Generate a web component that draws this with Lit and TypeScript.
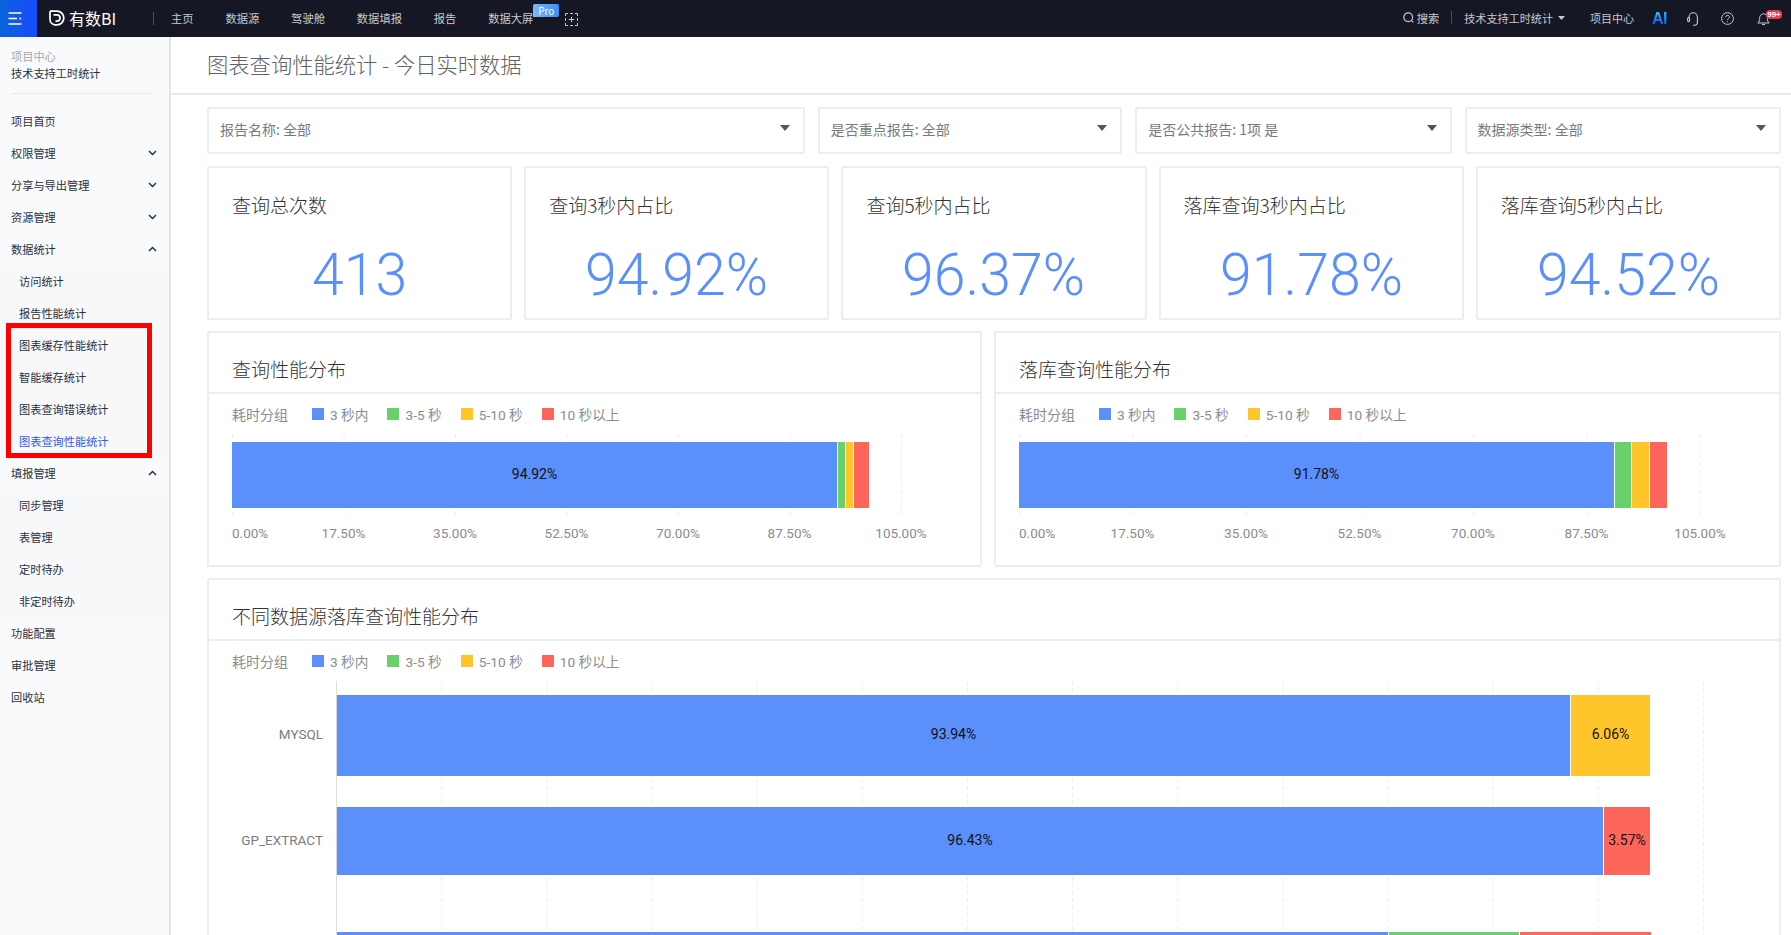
import { LitElement, html, css, svg } from "lit";
import { customElement } from "lit/decorators.js";

const BLUE = "#5b8ff9", GREEN = "#69d16c", YELLOW = "#ffc62b", RED = "#ff665b";

type NavItem = { t: string; kind?: "sub" | "active"; chev?: "up" | "down"; open?: boolean };
const MENU: NavItem[] = [
  { t: "项目首页" },
  { t: "权限管理", chev: "down" },
  { t: "分享与导出管理", chev: "down" },
  { t: "资源管理", chev: "down" },
  { t: "数据统计", chev: "up" },
  { t: "访问统计", kind: "sub" },
  { t: "报告性能统计", kind: "sub" },
  { t: "图表缓存性能统计", kind: "sub" },
  { t: "智能缓存统计", kind: "sub" },
  { t: "图表查询错误统计", kind: "sub" },
  { t: "图表查询性能统计", kind: "active" },
  { t: "填报管理", chev: "up" },
  { t: "同步管理", kind: "sub" },
  { t: "表管理", kind: "sub" },
  { t: "定时待办", kind: "sub" },
  { t: "非定时待办", kind: "sub" },
  { t: "功能配置" },
  { t: "审批管理" },
  { t: "回收站" },
];

const LEGEND = [
  { c: BLUE, t: "3 秒内" },
  { c: GREEN, t: "3-5 秒" },
  { c: YELLOW, t: "5-10 秒" },
  { c: RED, t: "10 秒以上" },
];

const STATS = [
  ["查询总次数", "413"],
  ["查询3秒内占比", "94.92%"],
  ["查询5秒内占比", "96.37%"],
  ["落库查询3秒内占比", "91.78%"],
  ["落库查询5秒内占比", "94.52%"],
];

const TICKS = ["0.00%", "17.50%", "35.00%", "52.50%", "70.00%", "87.50%", "105.00%"];

type Seg = { c: string; w: number; label?: string };

function smallChart(step: number, segs: Seg[]) {
  let x = 0;
  return html`<svg class="plot" width="760" height="125" viewBox="0 0 760 125">
    ${TICKS.map((_, i) => svg`<line class="grid" x1=${0.5 + i * step} x2=${0.5 + i * step} y1="4" y2="85"></line>`)}
    ${segs.map((s) => {
      const r = svg`<rect x=${x} y="12" width=${s.w} height="66" fill=${s.c}></rect>
        ${s.label ? svg`<text class="val" x=${x + s.w / 2} y="44">${s.label}</text>` : ""}`;
      x += s.w + 1;
      return r;
    })}
    ${TICKS.map(
      (t, i) => svg`<text class="tick" x=${i * step} y="103" text-anchor=${i === 0 ? "start" : "middle"}>${t}</text>`
    )}
  </svg>`;
}

function bigChart() {
  const x0 = 105;
  const rows = [
    { name: "MYSQL", y: 14, h: 81, segs: [{ c: BLUE, w: 1233, label: "93.94%" }, { c: YELLOW, w: 79, label: "6.06%" }] },
    { name: "GP_EXTRACT", y: 126, h: 68, segs: [{ c: BLUE, w: 1266, label: "96.43%" }, { c: RED, w: 46, label: "3.57%" }] },
    { name: "", y: 251, h: 69, segs: [{ c: BLUE, w: 1051 }, { c: GREEN, w: 130 }, { c: RED, w: 131 }] },
  ];
  return html`<svg class="plot" width="1530" height="256" viewBox="0 0 1530 256">
    ${Array.from({ length: 13 }, (_, i) => svg`<line class="grid" x1=${104.5 + 105.15 * (i + 1)} x2=${104.5 + 105.15 * (i + 1)} y1="0" y2="256"></line>`)}
    <line class="axis" x1="104.5" x2="104.5" y1="0" y2="256"></line>
    ${rows.map((row) => {
      let x = x0;
      const cy = row.y + row.h / 2 - 1.5;
      return svg`
        <text class="cat" x="91" y=${cy}>${row.name}</text>
        ${row.segs.map((s) => {
          const r = svg`<rect x=${x} y=${row.y} width=${s.w} height=${row.h} fill=${s.c}></rect>
            ${s.label ? svg`<text class="val" x=${x + s.w / 2} y=${cy}>${s.label}</text>` : ""}`;
          x += s.w + 1;
          return r;
        })}`;
    })}
  </svg>`;
}

const chevron = (dir?: "up" | "down") =>
  dir
    ? html`<svg class="chev" width="9" height="6" viewBox="0 0 9 6">
        <path d=${dir === "down" ? "M1 1l3.5 3.5L8 1" : "M1 5l3.5-3.5L8 5"} fill="none" stroke="#22283a" stroke-width="1.4"></path>
      </svg>`
    : "";

const caret = html`<svg class="sel-caret" width="10" height="6" viewBox="0 0 10 6"><path d="M0 0h10L5 6z" fill="#555"></path></svg>`;

@customElement("app-root")
export class AppRoot extends LitElement {
  static styles = css`
    :host {
      display: block;
      width: 1791px;
      height: 935px;
      overflow: hidden;
      background: #fff;
      font-family: "Noto Sans CJK SC", "Noto Sans", sans-serif;
      color: #333;
    }
    .top {
      height: 37px;
      background: #151824;
      display: flex;
      align-items: center;
      color: #c6c9d0;
      font-size: 11.3px;
    }
    .burger {
      box-sizing: border-box;
      width: 37px;
      height: 37px;
      padding-left: 8px;
      background: linear-gradient(90deg, #0b62d9, #1a4bff);
      display: flex;
      align-items: center;
    }
    .logo {
      display: flex;
      align-items: center;
      margin: 0 0 2px 12px;
      color: #fff;
      font-size: 16px;
      width: 104px;
      gap: 4px;
    }
    .vsep {
      width: 1px;
      height: 13px;
      background: #4a4e5a;
    }
    .nav {
      display: flex;
      gap: 31.8px;
      margin: 0 0 2px 17px;
    }
    .pro-wrap {
      position: relative;
    }
    .pro {
      position: absolute;
      left: 45px;
      top: -6px;
      width: 26px;
      height: 13px;
      line-height: 13px;
      font-size: 10px;
      text-align: center;
      color: #fff;
      border-radius: 2px 2px 2px 0;
      background: linear-gradient(90deg, #74bcff, #3f8ff2);
    }
    .fs {
      margin-left: 32px;
      margin-top: 1px;
    }
    .right {
      margin-left: auto;
      padding-right: 21px;
      display: flex;
      align-items: center;
      margin-bottom: 2px;
    }
    .search {
      display: flex;
      align-items: center;
      gap: 3px;
    }
    .m12 {
      margin-left: 12px;
    }
    .project {
      margin-left: 25px;
      font-size: 11px;
    }
    .user {
      margin-left: 12px;
      display: flex;
      align-items: center;
      gap: 5px;
      font-size: 11.1px;
    }
    .ai {
      margin: 2px 0 0 18px;
      width: 15px;
      font-family: "Liberation Sans", sans-serif;
      font-weight: 700;
      font-size: 16px;
      line-height: 18px;
      letter-spacing: -0.5px;
      background: linear-gradient(180deg, #2fc4ff 10%, #0d4df0 85%);
      -webkit-background-clip: text;
      background-clip: text;
      color: transparent;
    }
    .ico1 {
      margin: 2px 0 0 20px;
    }
    .ico2 {
      margin: 2px 0 0 22px;
    }
    .bell {
      margin: 2px 0 0 23px;
      position: relative;
      display: flex;
    }
    .badge {
      position: absolute;
      left: 9px;
      top: -2px;
      width: 16px;
      height: 9px;
      line-height: 9px;
      font-size: 8px;
      font-weight: 700;
      text-align: center;
      color: #fff;
      background: #e8394a;
      border-radius: 4px;
      font-family: "Liberation Sans", sans-serif;
    }
    .body {
      display: flex;
      height: 898px;
    }
    .side {
      position: relative;
      box-sizing: border-box;
      width: 171px;
      flex: none;
      background: #f9fafc;
      border-right: 2px solid #e4e5ea;
      font-size: 11.2px;
      color: #2b3040;
    }
    .crumb {
      padding: 11px 0 0 11px;
      height: 56px;
      box-sizing: border-box;
      line-height: 17px;
    }
    .crumb .dim {
      color: #a6a8ad;
    }
    .hr {
      height: 1px;
      background: #e9eaee;
      margin: 0 17px 0 11px;
    }
    .menu {
      padding-top: 11px;
    }
    .mi {
      height: 32px;
      display: flex;
      align-items: center;
      justify-content: space-between;
      padding: 0 12px 0 11px;
    }
    .mi.sub,
    .mi.active {
      padding-left: 19px;
      background: #f7f8fa;
    }
    .mi.active {
      color: #3658f0;
    }
    .mark {
      position: absolute;
      left: 6px;
      top: 286px;
      width: 146px;
      height: 135px;
      box-sizing: border-box;
      border: 5.5px solid #f00;
    }
    .main {
      flex: 1;
      min-width: 0;
      overflow: hidden;
    }
    .head {
      box-sizing: border-box;
      height: 58px;
      padding: 0 0 4px 36px;
      border-bottom: 2px solid #e8e8ec;
      display: flex;
      align-items: center;
      font-size: 21.3px;
      font-weight: 300;
      color: #5e6166;
    }
    .content {
      padding: 12px 10px 0 36px;
      display: flex;
      flex-direction: column;
      gap: 12px;
    }
    .filters {
      display: grid;
      grid-template-columns: 599fr 305fr 317fr 317fr;
      gap: 13px;
    }
    .sel {
      box-sizing: border-box;
      height: 47px;
      border: 2px solid #ecedf3;
      border-radius: 2px;
      display: flex;
      align-items: center;
      justify-content: space-between;
      padding: 0 13px 4px 11px;
      font-size: 14px;
      color: #777a80;
    }
    .sel-caret {
      margin-bottom: 2px;
    }
    .stats {
      display: grid;
      grid-template-columns: repeat(5, 1fr);
      gap: 12px;
      margin-bottom: -1px;
    }
    .card {
      box-sizing: border-box;
      border: 2px solid #ecedf3;
      border-radius: 2px;
      background: #fff;
    }
    .stat {
      height: 154px;
      padding: 25px 23px 0;
    }
    .stat-t {
      font-size: 19px;
      font-weight: 300;
      line-height: 24px;
      color: #333;
    }
    .num {
      margin-top: 28px;
      text-align: center;
      font-family: Roboto, sans-serif;
      font-weight: 300;
      font-size: 59px;
      line-height: 60px;
      color: #5b8ff9;
      transform: scaleX(0.97);
    }
    .charts {
      display: grid;
      grid-template-columns: 775px 1fr;
      gap: 12px;
      margin-bottom: -1px;
    }
    .chart {
      height: 236px;
    }
    .bigcard {
      height: 420px;
    }
    .ch {
      box-sizing: border-box;
      height: 61px;
      padding: 0 23px 11px;
      display: flex;
      align-items: flex-end;
      border-bottom: 2px solid #ecedf3;
      font-size: 19px;
      font-weight: 300;
      line-height: 24px;
      color: #333;
    }
    .legend {
      margin: 10px 0 0 23px;
      height: 20px;
      display: flex;
      align-items: center;
      font-family: Roboto, "Noto Sans CJK SC", sans-serif;
      font-size: 13.7px;
      color: #8a8c90;
    }
    .legend .lab {
      width: 80px;
      font-size: 14px;
    }
    .lg {
      display: flex;
      align-items: center;
      gap: 6px;
      margin-right: 19px;
    }
    .sw {
      width: 12px;
      height: 12px;
    }
    .plot {
      display: block;
      margin: 6px 0 0 23px;
      overflow: hidden;
    }
    .bigcard .plot {
      margin-top: 10px;
    }
    .grid {
      stroke: #eeeef1;
      stroke-width: 1;
      stroke-dasharray: 4 3;
    }
    .axis {
      stroke: #dcdcdf;
      stroke-width: 1;
    }
    .val {
      font-family: Roboto, sans-serif;
      font-size: 14px;
      text-anchor: middle;
      dominant-baseline: central;
      fill: #111;
    }
    .tick {
      font-family: Roboto, sans-serif;
      font-size: 13.5px;
      dominant-baseline: central;
      fill: #8a8c90;
    }
    .cat {
      font-family: Roboto, sans-serif;
      font-size: 13.5px;
      text-anchor: end;
      dominant-baseline: central;
      fill: #7a7c80;
    }
  `;

  render() {
    return html`
      <div class="top">
        <div class="burger">
          <svg width="14" height="13" viewBox="0 0 14 13" fill="none" stroke="#fff" stroke-width="1.3">
            <path d="M.5 1h13M.5 6.500h8.500M.5 12h13"></path>
            <path d="M11.500 5v3l2-1.500z" fill="#fff" stroke="none"></path>
          </svg>
        </div>
        <div class="logo">
          <svg width="16" height="16" viewBox="0 0 16 16" fill="none" stroke="#fff" stroke-width="1.7">
            <path d="M1 1.200h7a6.800 6.800 0 0 1 0 13.600H5.500"></path>
            <path d="M1 1.200v8a5.600 5.600 0 0 0 5 5.600"></path>
            <path d="M4.500 4.800h3.300a3.200 3.200 0 0 1 0 6.400H6.500"></path>
          </svg>
          <span>有数BI</span>
        </div>
        <div class="vsep"></div>
        <div class="nav">
          <span>主页</span><span>数据源</span><span>驾驶舱</span><span>数据填报</span><span>报告</span>
          <span class="pro-wrap">数据大屏<span class="pro">Pro</span></span>
        </div>
        <svg class="fs" width="13" height="13" viewBox="0 0 13 13" fill="none" stroke="#c6c9d0" stroke-width="1">
          <path d="M.5 3V.5H3M5 .5h3M10 .5h2.500V3M12.500 5v3M12.500 10v2.500H10M8 12.500H5M3 12.500H.5V10M.5 8V5"></path>
          <path d="M6.500 3.800v5.400M3.800 6.500h5.400"></path>
        </svg>
        <div class="right">
          <div class="search">
            <svg width="11" height="11" viewBox="0 0 11 11" fill="none" stroke="#c6c9d0" stroke-width="1.2">
              <circle cx="5.200" cy="5.200" r="4.400"></circle><path d="M8.400 8.400l2 2"></path>
            </svg>
            <span>搜索</span>
          </div>
          <div class="vsep m12"></div>
          <div class="user">
            <span>技术支持工时统计</span>
            <svg width="7" height="4" viewBox="0 0 7 4"><path d="M0 0h7L3.500 4z" fill="#c6c9d0"></path></svg>
          </div>
          <span class="project">项目中心</span>
          <span class="ai">AI</span>
          <svg class="ico1" width="12" height="14" viewBox="0 0 12 14" fill="none" stroke="#c6c9d0" stroke-width="1.1">
            <path d="M2 6V5a4.200 4.200 0 0 1 8.400 0v5a2.800 2.800 0 0 1-3 3.300H6"></path>
            <rect x=".6" y="5.600" width="2" height="4" rx="1"></rect>
          </svg>
          <svg class="ico2" width="13" height="13" viewBox="0 0 13 13" fill="none" stroke="#c6c9d0" stroke-width="1">
            <circle cx="6.500" cy="6.500" r="5.900"></circle>
            <path d="M4.800 5.200a1.800 1.800 0 1 1 2.600 1.500c-.6.3-.9.7-.9 1.300"></path>
            <path d="M6.500 9.200v1"></path>
          </svg>
          <div class="bell">
            <svg width="13" height="14" viewBox="0 0 13 14" fill="none" stroke="#c6c9d0" stroke-width="1">
              <path d="M.8 11h11.400c-1.400-1.200-1.800-2.500-1.800-4.600 0-2.600-1.500-4.600-3.900-4.600S2.600 3.800 2.600 6.400C2.600 8.500 2.200 9.800.8 11z"></path>
              <path d="M5 12.500h3"></path>
            </svg>
            <span class="badge">99+</span>
          </div>
        </div>
      </div>
      <div class="body">
        <aside class="side">
          <div class="crumb">
            <div class="dim">项目中心</div>
            <div>技术支持工时统计</div>
          </div>
          <div class="hr"></div>
          <div class="menu">
            ${MENU.map(
              (m) => html`<div class="mi ${m.kind ?? ""}"><span>${m.t}</span>${chevron(m.chev)}</div>`
            )}
          </div>
          <div class="mark"></div>
        </aside>
        <main class="main">
          <div class="head">图表查询性能统计 - 今日实时数据</div>
          <div class="content">
            <div class="filters">
              ${["报告名称: 全部", "是否重点报告: 全部", "是否公共报告: 1项 是", "数据源类型: 全部"].map(
                (f) => html`<div class="sel"><span>${f}</span>${caret}</div>`
              )}
            </div>
            <div class="stats">
              ${STATS.map(
                ([t, n]) => html`<div class="card stat">
                  <div class="stat-t">${t}</div>
                  <div class="num">${n}</div>
                </div>`
              )}
            </div>
            <div class="charts">
              <div class="card chart">
                <div class="ch">查询性能分布</div>
                ${this.legend()}
                ${smallChart(111.5, [
                  { c: BLUE, w: 605, label: "94.92%" },
                  { c: GREEN, w: 7 },
                  { c: YELLOW, w: 7 },
                  { c: RED, w: 15 },
                ])}
              </div>
              <div class="card chart">
                <div class="ch">落库查询性能分布</div>
                ${this.legend()}
                ${smallChart(113.5, [
                  { c: BLUE, w: 595, label: "91.78%" },
                  { c: GREEN, w: 16 },
                  { c: YELLOW, w: 17 },
                  { c: RED, w: 17 },
                ])}
              </div>
            </div>
            <div class="card bigcard">
              <div class="ch">不同数据源落库查询性能分布</div>
              ${this.legend()}
              ${bigChart()}
            </div>
          </div>
        </main>
      </div>
    `;
  }

  legend() {
    return html`<div class="legend">
      <span class="lab">耗时分组</span>
      ${LEGEND.map(
        (l) => html`<span class="lg"><span class="sw" style="background:${l.c}"></span>${l.t}</span>`
      )}
    </div>`;
  }
}
